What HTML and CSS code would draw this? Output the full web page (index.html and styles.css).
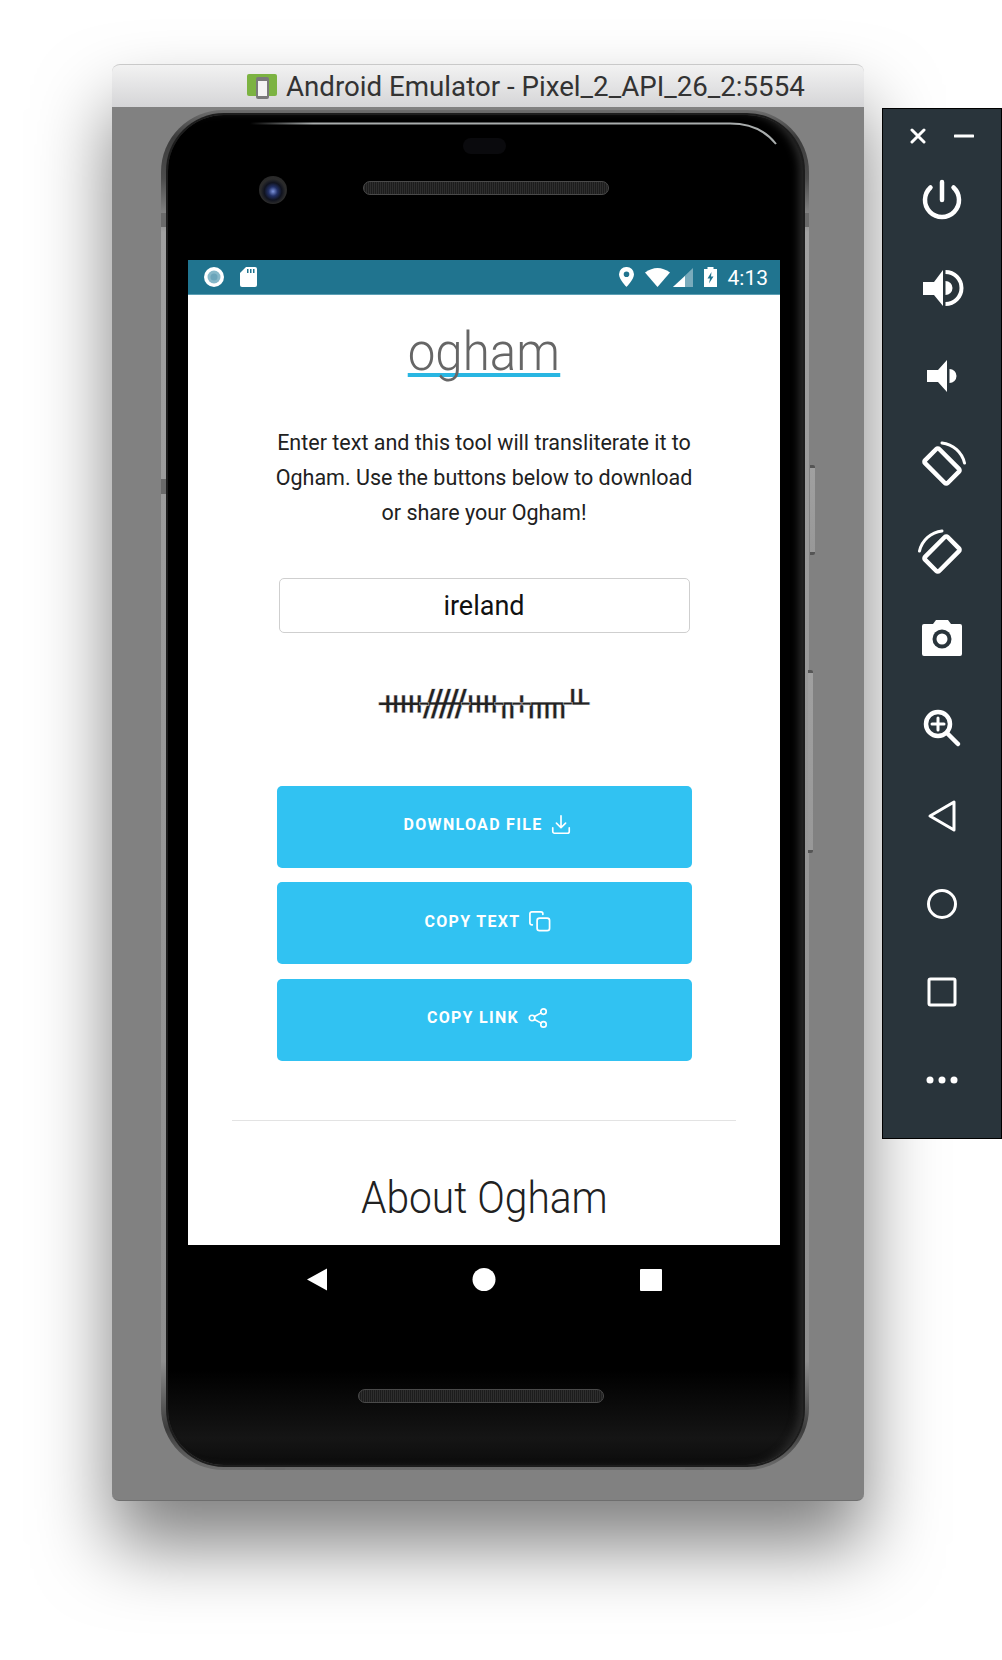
FILE: index.html
```html
<!DOCTYPE html>
<html lang="en">
<head>
    <meta charset="UTF-8">
    <title>Android Emulator - Pixel_2_API_26_2:5554</title>
    <link rel="stylesheet" href="styles.css">
</head>
<body>
    <div class="desktop">
        <div class="window">
            <div class="titlebar">
                <svg class="app-icon" width="30" height="25" viewBox="0 0 30 25">
                    <rect x="0" y="0" width="30" height="22" rx="2" fill="#7cb342"/>
                    <rect x="9" y="3" width="13" height="22" rx="2" fill="#7a7a7a"/>
                    <rect x="11" y="7" width="9" height="15" fill="#f4f4f4"/>
                </svg>
                <span class="title-text">Android Emulator - Pixel_2_API_26_2:5554</span>
            </div>
            <div class="window-body">
                <div class="phone">
                    <span class="seam seam-left-1"></span>
                    <span class="seam seam-left-2"></span>
                    <span class="seam seam-right-1"></span>
                    <span class="seam seam-top"></span>
                    <span class="seam seam-bottom-1"></span>
                    <span class="seam seam-bottom-2"></span>
                    <span class="side-key key-power"></span>
                    <span class="side-key key-volume"></span>
                    <div class="bezel">
                        <svg class="glare" width="540" height="26" viewBox="0 0 540 26">
                            <defs>
                                <linearGradient id="glareFade" x1="0" x2="1" y1="0" y2="0">
                                    <stop offset="0" stop-color="#a9adad" stop-opacity="0"/>
                                    <stop offset="0.12" stop-color="#a9adad"/>
                                    <stop offset="1" stop-color="#a9adad"/>
                                </linearGradient>
                            </defs>
                            <path d="M0 1.500H480Q510 1.500 526 22" fill="none" stroke="url(#glareFade)" stroke-width="2"/>
                        </svg>
                        <span class="sensor"></span>
                        <span class="lens"></span>
                        <span class="speaker speaker-top"></span>
                        <span class="speaker speaker-bottom"></span>

                        <div class="screen">
                            <div class="statusbar">
                                <div class="status-left">
                                    <svg width="20" height="20" viewBox="0 0 20 20">
                                        <circle cx="10" cy="10" r="10" fill="#fff"/>
                                        <circle cx="10" cy="10" r="6.5" fill="#86b8c9"/>
                                        <circle cx="10" cy="10" r="3.5" fill="#6ba5ba"/>
                                    </svg>
                                    <svg width="17" height="20" viewBox="0 0 17 20">
                                        <path d="M6 0H15a2 2 0 0 1 2 2V18a2 2 0 0 1-2 2H2a2 2 0 0 1-2-2V6z" fill="#fff"/>
                                        <path d="M7 2h1.500v4H7zM10 2h1.500v4H10zM13 2h1.500v4H13z" fill="#20748f"/>
                                    </svg>
                                </div>
                                <div class="status-right">
                                    <svg width="15" height="20" viewBox="0 0 15 20">
                                        <path fill-rule="evenodd" d="M7.500 0A7.300 7.300 0 0 0 0 7.300C0 12.500 7.500 20 7.500 20S15 12.500 15 7.300A7.300 7.300 0 0 0 7.500 0zM7.500 4.500a2.800 2.800 0 1 1 0 5.600a2.800 2.800 0 0 1 0-5.600z" fill="#fff"/>
                                    </svg>
                                    <svg class="icon-wifi" width="25" height="19" viewBox="0 0 25 19">
                                        <path d="M0 4.500Q12.500-4.500 25 4.500L12.500 19z" fill="#fff"/>
                                    </svg>
                                    <svg class="icon-signal" width="20" height="19" viewBox="0 0 20 19">
                                        <path d="M20 0V19H0z" fill="#fff" fill-opacity=".4"/>
                                        <path d="M12 8V19H0z" fill="#fff"/>
                                    </svg>
                                    <svg class="icon-battery" width="13" height="20" viewBox="0 0 13 20">
                                        <path fill-rule="evenodd" d="M3.500 0H9.500V2H13V20H0V2H3.500zM7.500 5L3.500 11.500H6L5 16.500L9.500 9.500H7z" fill="#fff"/>
                                    </svg>
                                    <span class="clock">4:13</span>
                                </div>
                            </div>

                            <div class="content">
                                <h1 class="logo"><span>ogham</span></h1>
                                <p class="intro">Enter text and this tool will transliterate it to Ogham. Use the buttons below to download or share your Ogham!</p>
                                <input class="text-input" type="text" value="ireland">
                                <div class="ogham-output">ᚔᚏᚓᚂᚐᚅᚇ</div>
                                <div class="actions">
                                    <button class="action">
                                        <span>Download file</span>
                                        <svg width="22" height="22" viewBox="0 0 24 24"><path d="M21 15v4a2 2 0 0 1-2 2H5a2 2 0 0 1-2-2v-4M7 10l5 5l5-5M12 15V2"/></svg>
                                    </button>
                                    <button class="action">
                                        <span>Copy text</span>
                                        <svg width="23" height="23" viewBox="0 0 24 24"><rect x="9.500" y="8.500" width="13" height="13" rx="2.500"/><path d="M4.500 15.500H4a2 2 0 0 1-2-2V4a2 2 0 0 1 2-2h9.500a2 2 0 0 1 2 2v.5"/></svg>
                                    </button>
                                    <button class="action">
                                        <span>Copy link</span>
                                        <svg width="22" height="22" viewBox="0 0 24 24"><circle cx="18" cy="5" r="3"/><circle cx="5.500" cy="12" r="3"/><circle cx="18" cy="19" r="3"/><path d="M8.200 13.600l7.200 4M15.400 6.400l-7.200 4"/></svg>
                                    </button>
                                </div>
                                <hr class="divider">
                                <h2 class="about"><span>About Ogham</span></h2>
                            </div>
                        </div>

                        <div class="navbar">
                            <svg width="24" height="23" viewBox="0 0 24 23"><path d="M22 0.500V22.500L2 11.500z" fill="#fff"/></svg>
                            <svg width="24" height="23" viewBox="0 0 24 23"><circle cx="12" cy="11.500" r="11.500" fill="#fff"/></svg>
                            <svg width="24" height="22" viewBox="0 0 24 22"><rect x="1" width="22" height="22" rx="1" fill="#fff"/></svg>
                        </div>
                    </div>
                </div>
            </div>
        </div>

        <div class="toolbar">
            <div class="toolbar-head">
                <svg width="16" height="16" viewBox="0 0 16 16"><path class="line" d="M2 2L14 14M14 2L2 14"/></svg>
                <svg width="20" height="16" viewBox="0 0 20 16"><path class="line" d="M1 8H19"/></svg>
            </div>
            <!-- power -->
            <svg class="tool" width="48" height="48" viewBox="0 0 48 48"><path class="line thick" d="M24 6V24M12.500 11.500A17 17 0 1 0 35.500 11.500"/></svg>
            <!-- volume up -->
            <svg class="tool" width="48" height="48" viewBox="0 0 48 48">
                <path class="solid" d="M5 18H16L25 6V42L16 31H5zM27.500 17A7 7 0 0 1 27.500 31zM27.500 6A18 18 0 0 1 27.500 42V38A14 14 0 0 0 27.500 10z"/>
            </svg>
            <!-- volume down -->
            <svg class="tool" width="48" height="48" viewBox="0 0 48 48">
                <path class="solid" d="M9 18H20L29 8V40L20 30H9zM31.500 17A7 7 0 0 1 31.500 31z"/>
            </svg>
            <!-- rotate right -->
            <svg class="tool" width="48" height="48" viewBox="0 0 48 48">
                <rect class="line thick" x="-16" y="-10" width="32" height="20" rx="2" transform="translate(24 26) rotate(45)"/>
                <path class="line" d="M24 3A26 26 0 0 1 46.500 23"/>
            </svg>
            <!-- rotate left -->
            <svg class="tool" width="48" height="48" viewBox="0 0 48 48">
                <rect class="line thick" x="-16" y="-10" width="32" height="20" rx="2" transform="translate(24 26) rotate(-45)"/>
                <path class="line" d="M24 3A26 26 0 0 0 1.500 23"/>
            </svg>
            <!-- screenshot -->
            <svg class="tool" width="48" height="48" viewBox="0 0 48 48">
                <path class="solid" d="M6 8H15L18 4H30L33 8H42A2 2 0 0 1 44 10V38A2 2 0 0 1 42 40H6A2 2 0 0 1 4 38V10A2 2 0 0 1 6 8z"/>
                <circle cx="24" cy="23" r="9.500" fill="#29343b"/>
                <circle cx="24" cy="23" r="5.500" fill="#fff"/>
            </svg>
            <!-- zoom -->
            <svg class="tool" width="48" height="48" viewBox="0 0 48 48">
                <circle class="line thick" cx="20" cy="20" r="12"/>
                <path class="line thick" d="M29 29L40 40"/>
                <path class="line" d="M20 14V26M14 20H26"/>
            </svg>
            <!-- back -->
            <svg class="tool" width="48" height="48" viewBox="0 0 48 48"><path class="line" d="M12 24L36 10V38z"/></svg>
            <!-- home -->
            <svg class="tool" width="48" height="48" viewBox="0 0 48 48"><circle class="line" cx="24" cy="24" r="13.500"/></svg>
            <!-- overview -->
            <svg class="tool" width="48" height="48" viewBox="0 0 48 48"><rect class="line" x="11" y="11" width="26" height="26" rx="1.500"/></svg>
            <!-- more -->
            <svg class="tool" width="48" height="48" viewBox="0 0 48 48"><circle class="solid" cx="12" cy="24" r="3.500"/><circle class="solid" cx="24" cy="24" r="3.500"/><circle class="solid" cx="36" cy="24" r="3.500"/></svg>
        </div>
    </div>
</body>
</html>
```

FILE: styles.css
```css
body {
    margin: 0;
    background-color: #fff;
    font-family: Roboto, "Liberation Sans", sans-serif;
}

.desktop {
    display: flex;
    align-items: flex-start;
    width: 1002px;
    height: 1660px;
    overflow: hidden;
    box-sizing: border-box;
    padding: 64px 0 0 112px;
}

/* emulator window */
.window {
    width: 752px;
    height: 1437px;
    flex-shrink: 0;
    border-radius: 8px;
    box-shadow: 0 44px 75px rgba(0, 0, 0, 0.5);
}

.titlebar {
    display: flex;
    align-items: center;
    height: 43px;
    box-sizing: border-box;
    padding: 0 0 0 135px;
    gap: 9px;
    background: linear-gradient(#f2f2f2, #d5d5d7);
    border-top: 1px solid #c9c9c9;
    border-radius: 8px 8px 0 0;
}

.title-text {
    font-size: 27.700px;
    color: #333;
    white-space: nowrap;
}

.window-body {
    height: 1394px;
    box-sizing: border-box;
    padding: 3px 0 0 49px;
    background-color: #818181;
    border-radius: 0 0 7px 7px;
    border-bottom: 1px solid #6e6e6e;
}

/* phone */
.phone {
    position: relative;
    width: 648px;
    height: 1360px;
    box-sizing: border-box;
    padding: 5px 6px 5px 7px;
    border-radius: 62px;
    background: linear-gradient(#6e6e6e, #3c3c3c 2%, #4c4c4c 5%, #a0a0a0 9%, #8e8e8e 92%, #3c3c3c 97%, #6e6e6e);
}

.bezel {
    position: relative;
    height: 100%;
    box-sizing: border-box;
    padding: 145px 23px 0 20px;
    border-radius: 56px;
    background: linear-gradient(#000 93%, #151515 98%, #0c0c0c);
    box-shadow: 0 0 0 2px #1d1d1d, inset -7px 0 8px -3px #2c2c2c;
}

.glare {
    position: absolute;
    top: 7px;
    left: 82px;
}

.sensor {
    position: absolute;
    top: 23px;
    left: 295px;
    width: 43px;
    height: 16px;
    border-radius: 8px;
    background-color: #0a0a0d;
}

.lens {
    position: absolute;
    top: 61px;
    left: 91px;
    width: 28px;
    height: 28px;
    border-radius: 50%;
    background: radial-gradient(circle at 50% 55%, #7d93dc 0, #223066 22%, #10131f 42%, #2b2b2b 60%, #242424 100%);
}

.speaker {
    position: absolute;
    width: 244px;
    height: 12px;
    border: 1px solid #4a4a4a;
    border-radius: 7px;
    background: repeating-linear-gradient(90deg, #2e2e2e 0, #2e2e2e 1px, #1c1c1c 1px, #1c1c1c 2px);
}

.speaker-top {
    top: 66px;
    left: 195px;
}

.speaker-bottom {
    top: 1274px;
    left: 190px;
}

.seam {
    position: absolute;
    background-color: #6a6a6a;
}

.seam-left-1 {
    top: 103px;
    left: 0;
    width: 8px;
    height: 14px;
}

.seam-left-2 {
    top: 369px;
    left: 0;
    width: 8px;
    height: 15px;
}

.seam-right-1 {
    top: 103px;
    right: 0;
    width: 7px;
    height: 14px;
}

.seam-top {
    top: 0;
    left: 495px;
    width: 19px;
    height: 5px;
}

.seam-bottom-1 {
    bottom: 0;
    left: 104px;
    width: 20px;
    height: 5px;
}

.seam-bottom-2 {
    bottom: 0;
    left: 524px;
    width: 19px;
    height: 5px;
}

.side-key {
    position: absolute;
    width: 5px;
    background: linear-gradient(#555 3px, #a0a0a0 3px, #989898 calc(100% - 3px), #555 calc(100% - 3px));
    border-radius: 0 2px 2px 0;
}

.key-power {
    top: 355px;
    right: -6px;
    height: 90px;
}

.key-volume {
    top: 560px;
    right: -4px;
    height: 183px;
}

/* app screen */
.screen {
    width: 592px;
}

.statusbar {
    display: flex;
    justify-content: space-between;
    align-items: center;
    height: 35px;
    box-sizing: border-box;
    padding: 0 12px 0 16px;
    background-color: #20748f;
    border-bottom: 1px solid #5c9fb4;
}

.status-left,
.status-right {
    display: flex;
    align-items: center;
}

.status-left {
    gap: 16px;
}

.status-right {
    gap: 11px;
}

.icon-signal {
    margin-left: -8px;
}

.clock {
    margin-top: 1px;
    font-size: 21px;
    color: #fff;
}

.content {
    display: flex;
    flex-direction: column;
    align-items: center;
    height: 950px;
    overflow: hidden;
    background-color: #fff;
    color: #212121;
}

.logo {
    margin: 36px 0 0;
    font-size: 53px;
    font-weight: 300;
    line-height: 42px;
    color: #666;
}

.logo span {
    display: inline-block;
    border-bottom: 4px solid #29b6e2;
    transform: scaleX(0.93);
}

.intro {
    width: 440px;
    margin: 47.500px 0 0;
    font-size: 21.500px;
    line-height: 35px;
    text-align: center;
}

.text-input {
    display: block;
    width: 411px;
    height: 55px;
    box-sizing: border-box;
    margin-top: 48.500px;
    border: 1px solid #cfcfcf;
    border-radius: 5px;
    font-family: inherit;
    font-size: 27px;
    text-align: center;
    color: #111;
}

.ogham-output {
    margin-top: 39px;
    height: 60px;
    padding-right: 8px;
    font-family: "DejaVu Sans", sans-serif;
    font-size: 36px;
    line-height: 60px;
    letter-spacing: -8px;
    color: #222;
    -webkit-text-stroke: 0.4px #fff;
    white-space: nowrap;
}

.actions {
    display: flex;
    flex-direction: column;
    gap: 14.500px;
    margin-top: 53.500px;
}

.action {
    display: flex;
    justify-content: center;
    align-items: center;
    gap: 8px;
    width: 415px;
    height: 82px;
    padding: 0 0 4px 8px;
    border: none;
    border-radius: 5px;
    background-color: #31c2f2;
    color: #fff;
    font-family: inherit;
    font-size: 16px;
    font-weight: 700;
    letter-spacing: 1.300px;
    text-transform: uppercase;
}

.action svg {
    fill: none;
    stroke: #fff;
    stroke-width: 1.800;
    stroke-linecap: round;
    stroke-linejoin: round;
}

.divider {
    width: 504px;
    margin: 59px 0 0;
    border: none;
    border-top: 1px solid #e3e3e3;
}

.about {
    margin: 49.500px 0 0;
    font-size: 45px;
    font-weight: 300;
    line-height: 56px;
    color: #212121;
    white-space: nowrap;
}

.about span {
    display: inline-block;
    transform: scaleX(0.905);
}

.navbar {
    display: flex;
    justify-content: center;
    align-items: center;
    gap: 143px;
    margin-top: 23px;
    width: 592px;
    height: 23px;
}

/* emulator tool panel */
.toolbar {
    display: flex;
    flex-direction: column;
    align-items: center;
    flex-shrink: 0;
    width: 120px;
    height: 1031px;
    box-sizing: border-box;
    margin: 44px 0 0 18px;
    border: 1px solid #000;
    background-color: #29343b;
}

.toolbar-head {
    display: flex;
    justify-content: space-between;
    align-items: center;
    flex-shrink: 0;
    width: 64px;
    height: 54px;
    margin-bottom: 13px;
}

.tool {
    flex-shrink: 0;
    margin-bottom: 40px;
}

.line {
    fill: none;
    stroke: #fff;
    stroke-width: 3;
    stroke-linecap: round;
    stroke-linejoin: round;
}

.thick {
    stroke-width: 4.500;
}

.solid {
    fill: #fff;
}
```
